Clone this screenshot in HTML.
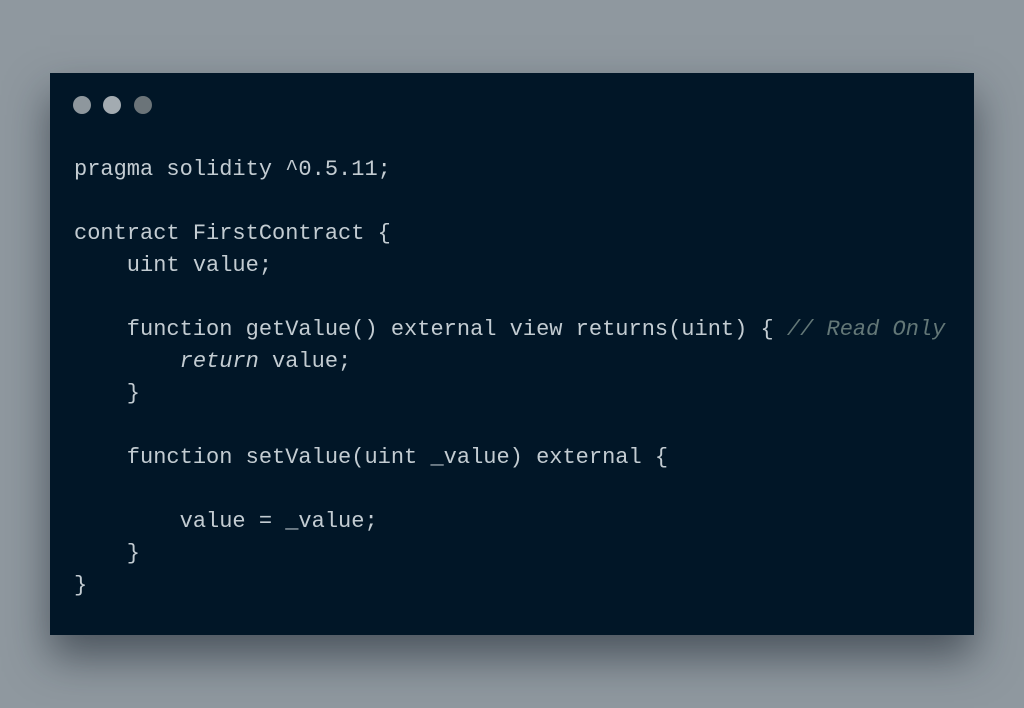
<!DOCTYPE html>
<html><head><meta charset="utf-8"><style>
html,body{margin:0;padding:0;}
body{width:1024px;height:708px;background:#8f989f;position:relative;overflow:hidden;}
.win{position:absolute;left:50px;top:73px;width:924px;height:562px;background:#011627;box-shadow:0 22px 40px rgba(20,30,40,0.55);}
.dot{position:absolute;top:23px;width:18px;height:18px;border-radius:50%;}
pre{position:absolute;left:24px;top:81px;margin:0;font-family:"Liberation Mono",monospace;font-size:22px;line-height:32px;color:#c3ccd2;}
i{font-style:italic;}
.c{color:#637777;font-style:italic;}
</style></head><body>
<div class="win">
<div class="dot" style="left:23px;background:#8e979d"></div>
<div class="dot" style="left:53px;background:#a3abb1"></div>
<div class="dot" style="left:84px;background:#6b7479"></div>
<pre>pragma solidity ^0.5.11;

contract FirstContract {
    uint value;

    function getValue() external view returns(uint) { <span class="c">// Read Only</span>
        <i>return</i> value;
    }

    function setValue(uint _value) external {

        value = _value;
    }
}</pre>
</div>
</body></html>
